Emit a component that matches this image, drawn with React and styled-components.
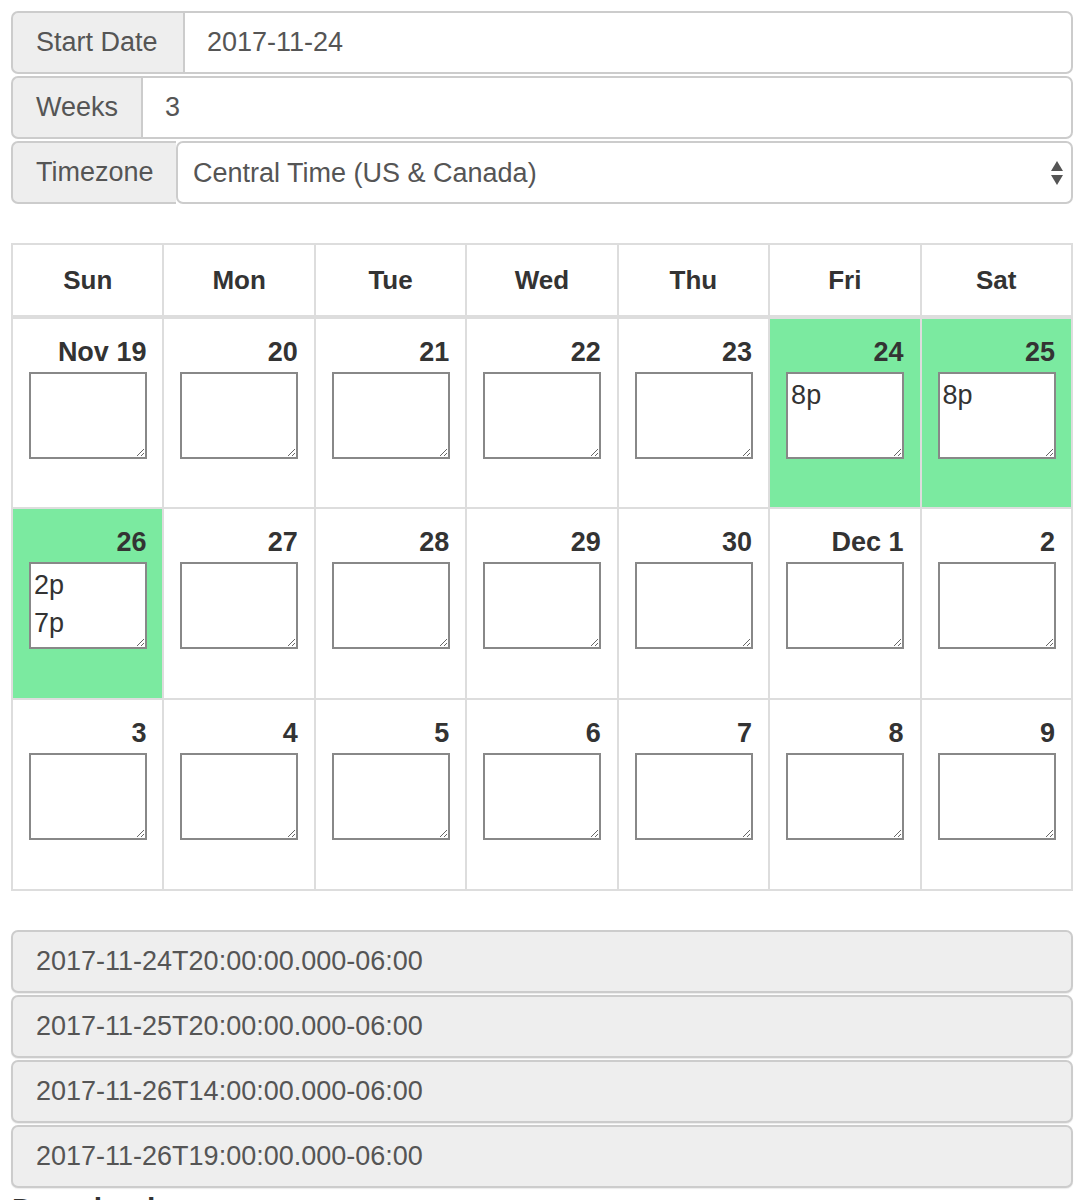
import React from "react";
import styled, { createGlobalStyle } from "styled-components";

const GlobalStyle = createGlobalStyle`
  html, body {
    margin: 0;
    padding: 0;
    background: #fff;
    font-family: "Liberation Sans", Arial, sans-serif;
    color: #333;
  }
  * {
    box-sizing: border-box;
  }
`;

const Page = styled.div`
  width: 1062px;
  margin: 11px 0 0 11px;
`;

const InputGroup = styled.div`
  display: flex;
  height: 63px;
  margin-bottom: 2px;
`;

const Addon = styled.span`
  display: flex;
  align-items: center;
  flex: 0 0 ${(p) => p.$width}px;
  padding: 0 0 0 23px;
  background: #eee;
  border: 2px solid #ccc;
  border-right: 0;
  border-radius: 7px 0 0 7px;
  color: #555;
  font-size: 27px;
`;

const TextInput = styled.input`
  flex: 1;
  min-width: 0;
  height: 100%;
  padding: 0 22px;
  border: 2px solid #ccc;
  border-radius: 0 7px 7px 0;
  font-family: inherit;
  font-size: 27px;
  color: #555;
  background: #fff;
  outline: none;
`;

const SelectWrap = styled.div`
  position: relative;
  flex: 1;
  display: flex;
`;

const Select = styled.select`
  flex: 1;
  height: 100%;
  padding: 0 40px 0 15px;
  border: 2px solid #ccc;
  border-radius: 7px;
  font-family: inherit;
  font-size: 27px;
  color: #555;
  background: #fff;
  appearance: none;
  -webkit-appearance: none;
  outline: none;
`;

const SelectArrows = styled.svg`
  position: absolute;
  right: 9px;
  top: 19px;
  pointer-events: none;
`;

const Calendar = styled.table`
  width: 1062px;
  margin-top: 39px;
  border-collapse: collapse;
  table-layout: fixed;
  border: 2px solid #ddd;
`;

const HeadCell = styled.th`
  height: 73px;
  border: 2px solid #ddd;
  border-bottom-width: 4px;
  font-size: 26px;
  font-weight: bold;
  color: #333;
  text-align: center;
  vertical-align: middle;
`;

const DayCell = styled.td`
  height: 191px;
  padding: 15px 16px 0 16px;
  border: 2px solid #ddd;
  vertical-align: top;
  background: ${(p) => (p.$active ? "#7beaa0" : "#fff")};
`;

const DayNumber = styled.div`
  text-align: right;
  font-size: 27px;
  font-weight: bold;
  line-height: 37px;
  color: #333;
`;

const Times = styled.textarea`
  display: block;
  width: 118px;
  height: 87px;
  margin-top: 1px;
  padding: 2px 3px;
  border: 2px solid #888;
  font-family: inherit;
  font-size: 27px;
  line-height: 38px;
  color: #333;
  background: #fff;
  overflow: hidden;
  outline: none;
`;

const SlotList = styled.div`
  margin-top: 39px;
`;

const Slot = styled.div`
  display: flex;
  align-items: center;
  height: 63px;
  margin-bottom: 2px;
  padding: 0 23px;
  background: #eee;
  border: 2px solid #ccc;
  border-radius: 7px;
  box-shadow: 0 1px 1px rgba(0, 0, 0, 0.08);
  font-size: 27px;
  color: #555;
`;

const SectionTitle = styled.h3`
  margin: 4px 0 0 1px;
  font-size: 30px;
  font-weight: bold;
  color: #333;
`;

const DAYS = ["Sun", "Mon", "Tue", "Wed", "Thu", "Fri", "Sat"];

const WEEKS = [
  [
    { label: "Nov 19" },
    { label: "20" },
    { label: "21" },
    { label: "22" },
    { label: "23" },
    { label: "24", times: "8p" },
    { label: "25", times: "8p" },
  ],
  [
    { label: "26", times: "2p\n7p" },
    { label: "27" },
    { label: "28" },
    { label: "29" },
    { label: "30" },
    { label: "Dec 1" },
    { label: "2" },
  ],
  [
    { label: "3" },
    { label: "4" },
    { label: "5" },
    { label: "6" },
    { label: "7" },
    { label: "8" },
    { label: "9" },
  ],
];

const SLOTS = [
  "2017-11-24T20:00:00.000-06:00",
  "2017-11-25T20:00:00.000-06:00",
  "2017-11-26T14:00:00.000-06:00",
  "2017-11-26T19:00:00.000-06:00",
];

export default function App() {
  return (
    <Page>
      <GlobalStyle />
      <InputGroup>
        <Addon $width={172}>Start Date</Addon>
        <TextInput defaultValue="2017-11-24" />
      </InputGroup>
      <InputGroup>
        <Addon $width={130}>Weeks</Addon>
        <TextInput defaultValue="3" />
      </InputGroup>
      <InputGroup>
        <Addon $width={165}>Timezone</Addon>
        <SelectWrap>
          <Select defaultValue="central">
            <option value="eastern">Eastern Time (US &amp; Canada)</option>
            <option value="central">Central Time (US &amp; Canada)</option>
            <option value="mountain">Mountain Time (US &amp; Canada)</option>
            <option value="pacific">Pacific Time (US &amp; Canada)</option>
          </Select>
          <SelectArrows width="14" height="26" viewBox="0 0 14 26">
            <path d="M7 1 L13 11 L1 11 Z" fill="#555" />
            <path d="M1 15 L13 15 L7 25 Z" fill="#555" />
          </SelectArrows>
        </SelectWrap>
      </InputGroup>

      <Calendar>
        <thead>
          <tr>
            {DAYS.map((d) => (
              <HeadCell key={d}>{d}</HeadCell>
            ))}
          </tr>
        </thead>
        <tbody>
          {WEEKS.map((week, i) => (
            <tr key={i}>
              {week.map((day) => (
                <DayCell key={day.label} $active={!!day.times}>
                  <DayNumber>{day.label}</DayNumber>
                  <Times defaultValue={day.times || ""} />
                </DayCell>
              ))}
            </tr>
          ))}
        </tbody>
      </Calendar>

      <SlotList>
        {SLOTS.map((s) => (
          <Slot key={s}>{s}</Slot>
        ))}
      </SlotList>
      <SectionTitle>Download</SectionTitle>
    </Page>
  );
}
